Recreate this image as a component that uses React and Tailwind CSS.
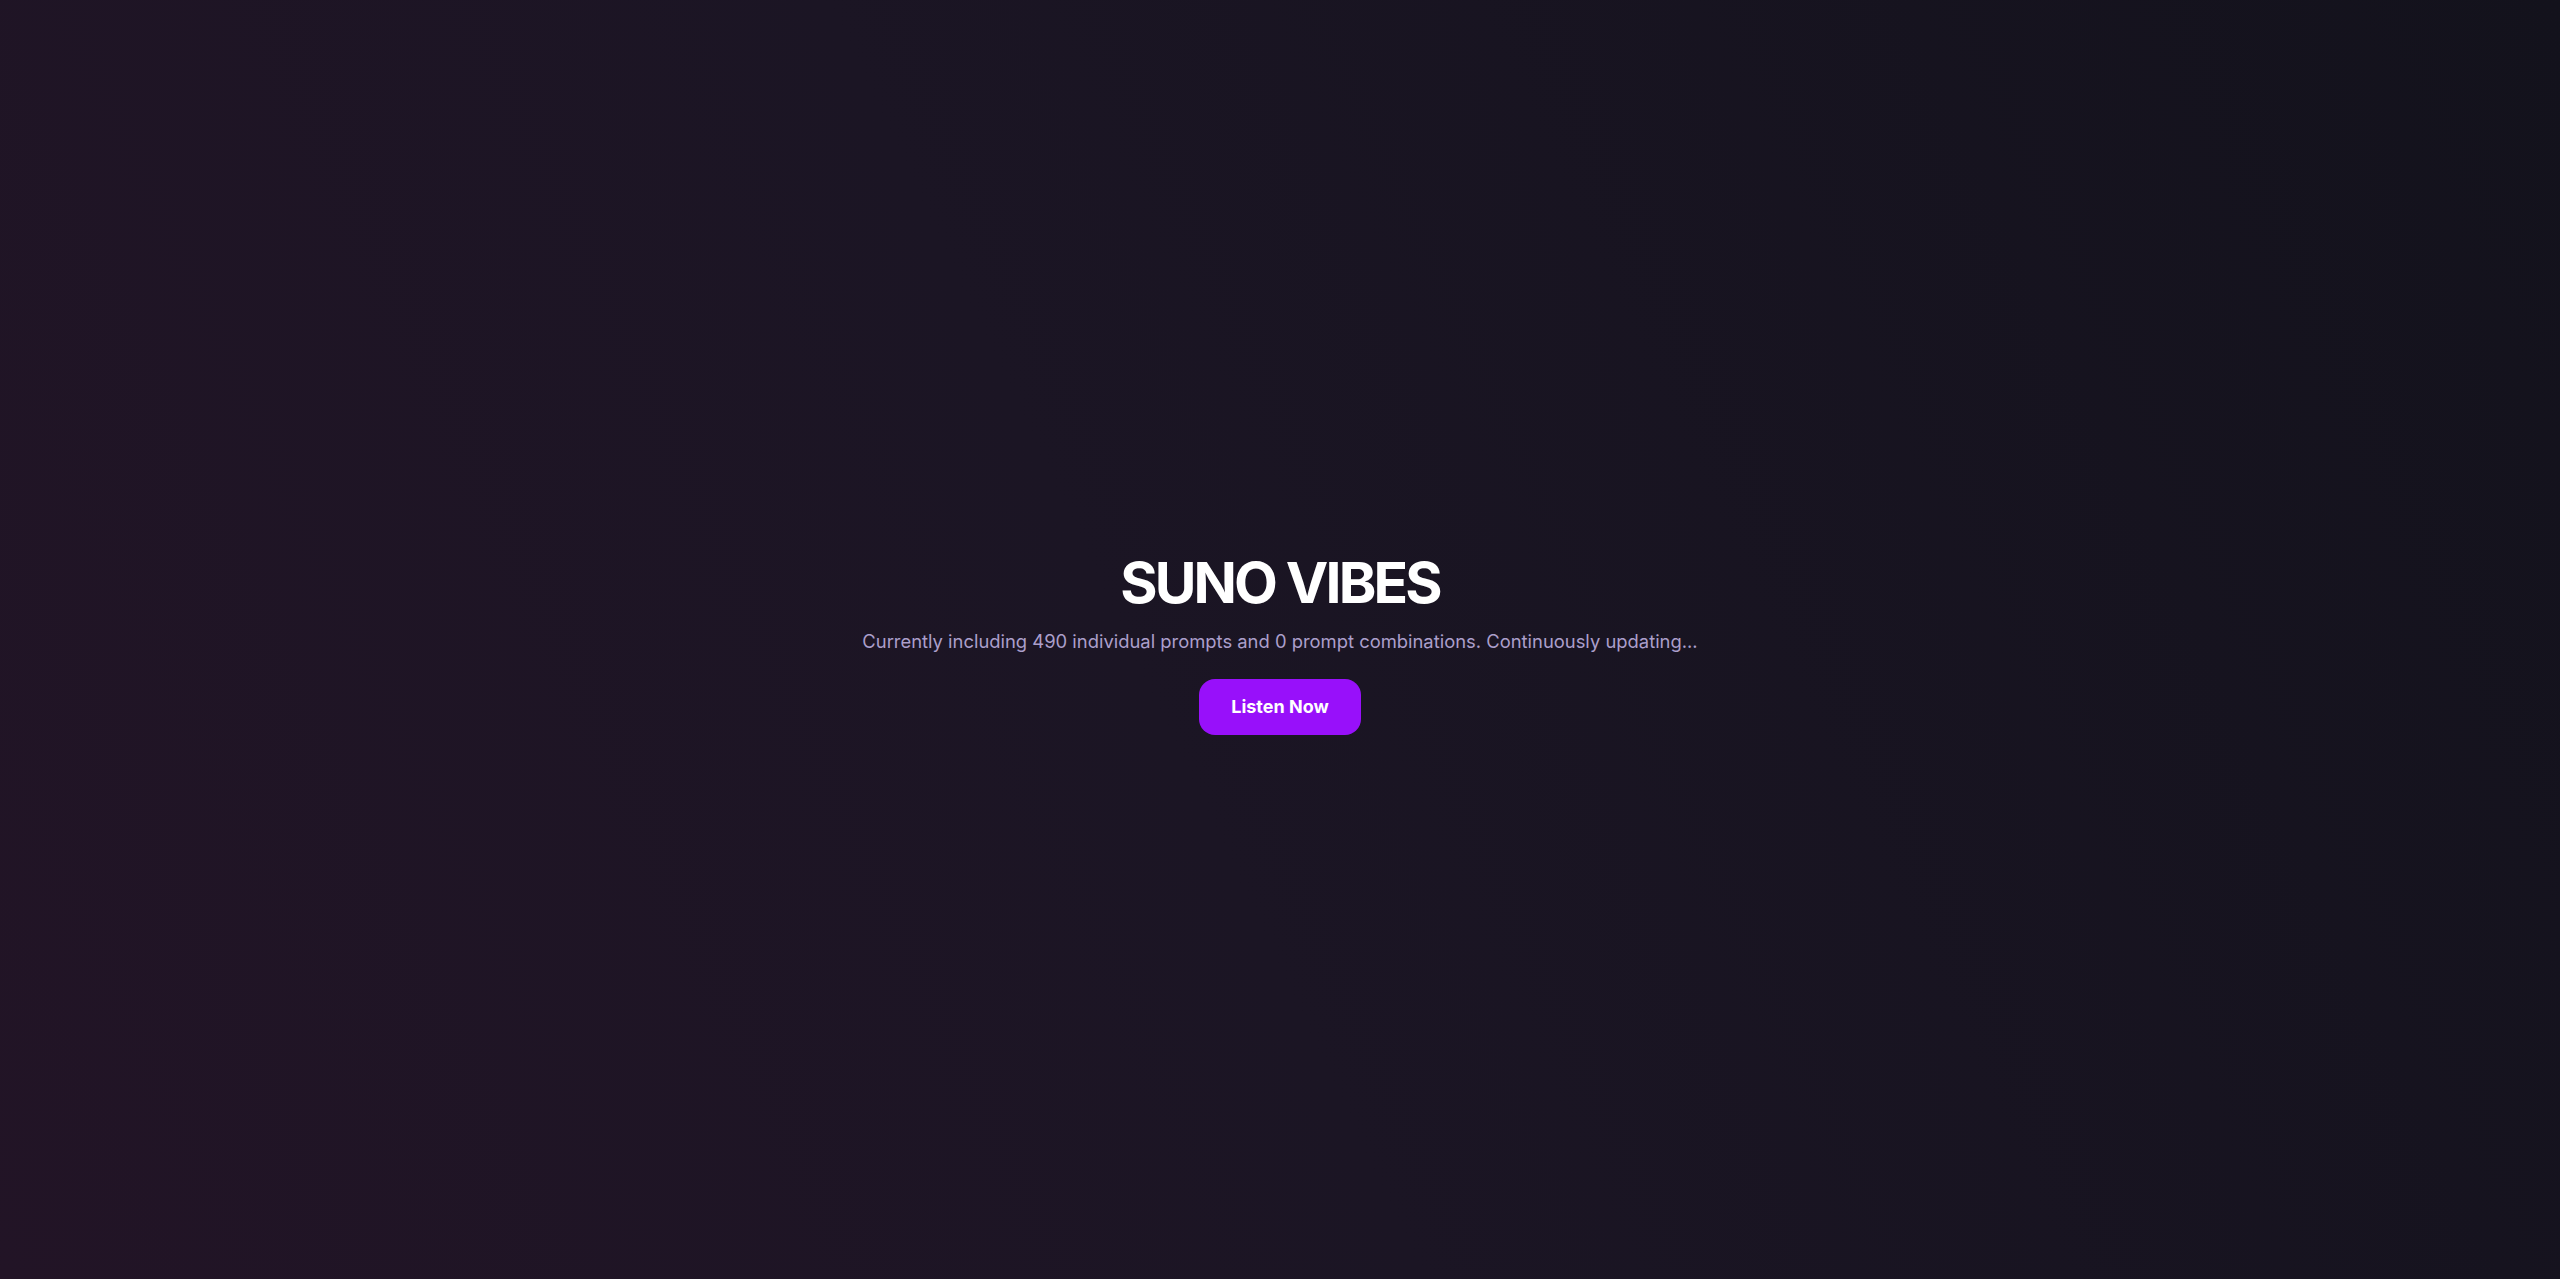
export default function App() {
  return (
    <div className="min-h-screen w-full bg-linear-[65deg] from-[#221426] via-[#1b1524] via-45% to-[#13121c] flex items-center justify-center font-['Inter',sans-serif]">
      <div className="flex flex-col items-center text-center pt-[10px]">
        <h1 className="text-[57px] leading-none font-bold tracking-[-0.05em] text-white">SUNO VIBES</h1>
        <p className="mt-4 text-[18.4px] leading-7 text-[#ab9fcb]">
          Currently including 490 individual prompts and 0 prompt combinations. Continuously updating...
        </p>
        <button className="mt-6 px-8 py-3.5 rounded-2xl bg-[#9810fa] text-white text-lg leading-7 font-bold">
          Listen Now
        </button>
      </div>
    </div>
  );
}
